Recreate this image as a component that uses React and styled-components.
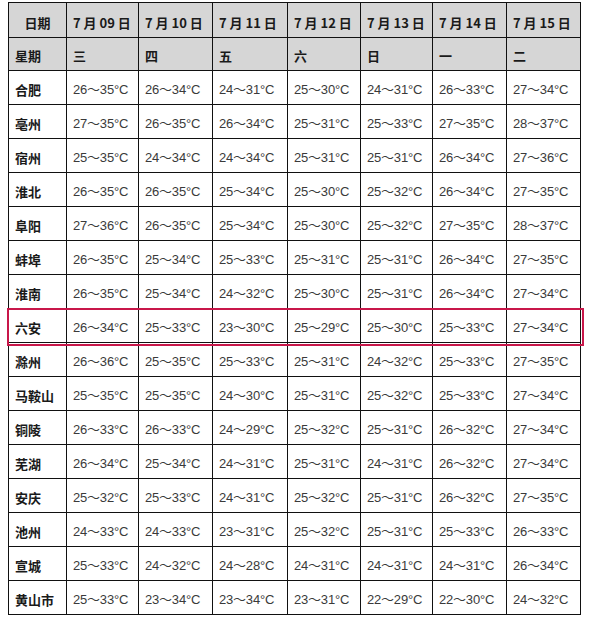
import React from "react";
import styled, {createGlobalStyle} from "styled-components";

const GlobalStyle = createGlobalStyle`
    html, body {
        margin: 0;
        background: #fff;
    }
    body {
        padding: 2px 8px;
        font-family: "Liberation Sans", "Noto Sans CJK SC", sans-serif;
    }
`;

const dates = ["09", "10", "11", "12", "13", "14", "15"];
const weekdays = ["三", "四", "五", "六", "日", "一", "二"];

const rows = [
    ["合肥", "26～35", "26～34", "24～31", "25～30", "24～31", "26～33", "27～34"],
    ["亳州", "27～35", "26～35", "26～34", "25～31", "25～33", "27～35", "28～37"],
    ["宿州", "25～35", "24～34", "24～34", "25～31", "25～31", "26～34", "27～36"],
    ["淮北", "26～35", "26～35", "25～34", "25～30", "25～32", "26～34", "27～35"],
    ["阜阳", "27～36", "26～35", "25～34", "25～30", "25～32", "27～35", "28～37"],
    ["蚌埠", "26～35", "25～34", "25～33", "25～31", "25～31", "26～34", "27～35"],
    ["淮南", "26～35", "25～34", "24～32", "25～30", "25～31", "26～34", "27～34"],
    ["六安", "26～34", "25～33", "23～30", "25～29", "25～30", "25～33", "27～34"],
    ["滁州", "26～36", "25～35", "25～33", "25～31", "24～32", "25～33", "27～35"],
    ["马鞍山", "25～35", "25～35", "24～30", "25～31", "25～32", "25～33", "27～34"],
    ["铜陵", "26～33", "26～33", "24～29", "25～32", "25～31", "26～32", "27～34"],
    ["芜湖", "26～34", "25～34", "24～31", "25～31", "24～31", "26～32", "27～34"],
    ["安庆", "25～32", "25～33", "24～31", "25～32", "25～31", "26～32", "27～35"],
    ["池州", "24～33", "24～33", "23～31", "25～32", "25～31", "25～33", "26～33"],
    ["宣城", "25～33", "24～32", "24～28", "24～31", "24～31", "24～31", "26～34"],
    ["黄山市", "25～33", "23～34", "23～34", "23～31", "22～29", "22～30", "24～32"],
];

export default function App() {
    return (
        <>
            <GlobalStyle/>
            <Table>
                <Row $height={35} $head>
                    <Cell $center><Label>日期</Label></Cell>
                    {dates.map(d => (
                        <Cell key={d}><Label>7 月 {d} 日</Label></Cell>
                    ))}
                </Row>
                <Row $height={33} $head>
                    <Cell><Label>星期</Label></Cell>
                    {weekdays.map(w => (
                        <Cell key={w}><Label>{w}</Label></Cell>
                    ))}
                </Row>
                {rows.map(([city, ...temps]) => (
                    <Row key={city} $height={34} $marked={city === "六安"}>
                        <Cell><Label>{city}</Label></Cell>
                        {temps.map((t, i) => (
                            <Cell key={i}><Temp>{t}°C</Temp></Cell>
                        ))}
                    </Row>
                ))}
            </Table>
        </>
    );
}

const Table = styled.div`
    width: 573px;
    border-left: 1px solid #111;
    border-top: 1px solid #111;
    box-sizing: border-box;
`;

const Row = styled.div`
    position: relative;
    display: grid;
    grid-template-columns: 58px 72px 74px 75px 73px 72px 74px 74px;
    height: ${p => p.$height}px;
    background: ${p => p.$head ? "#d6d6d6" : "#fff"};

    ${p => p.$marked && `
        z-index: 1;
        &::after {
            content: "";
            position: absolute;
            top: -1px;
            left: -2px;
            right: -3px;
            bottom: -3px;
            border: 2px solid #c8174a;
            pointer-events: none;
        }
    `}
`;

const Cell = styled.div`
    display: flex;
    align-items: flex-end;
    justify-content: ${p => p.$center ? "center" : "flex-start"};
    padding: 0 0 6px 6px;
    padding-left: ${p => p.$center ? "0" : "6px"};
    border-right: 1px solid #111;
    border-bottom: 1px solid #111;
    box-sizing: border-box;
    overflow: hidden;
    white-space: nowrap;
`;

const Label = styled.span`
    font-family: "Noto Sans CJK SC", "Liberation Sans", sans-serif;
    font-weight: 700;
    font-size: 13px;
    line-height: 16px;
    color: #1a1a1a;
`;

const Temp = styled.span`
    font-size: 13px;
    line-height: 16px;
    color: #3a3a3a;
    letter-spacing: -0.2px;
`;
